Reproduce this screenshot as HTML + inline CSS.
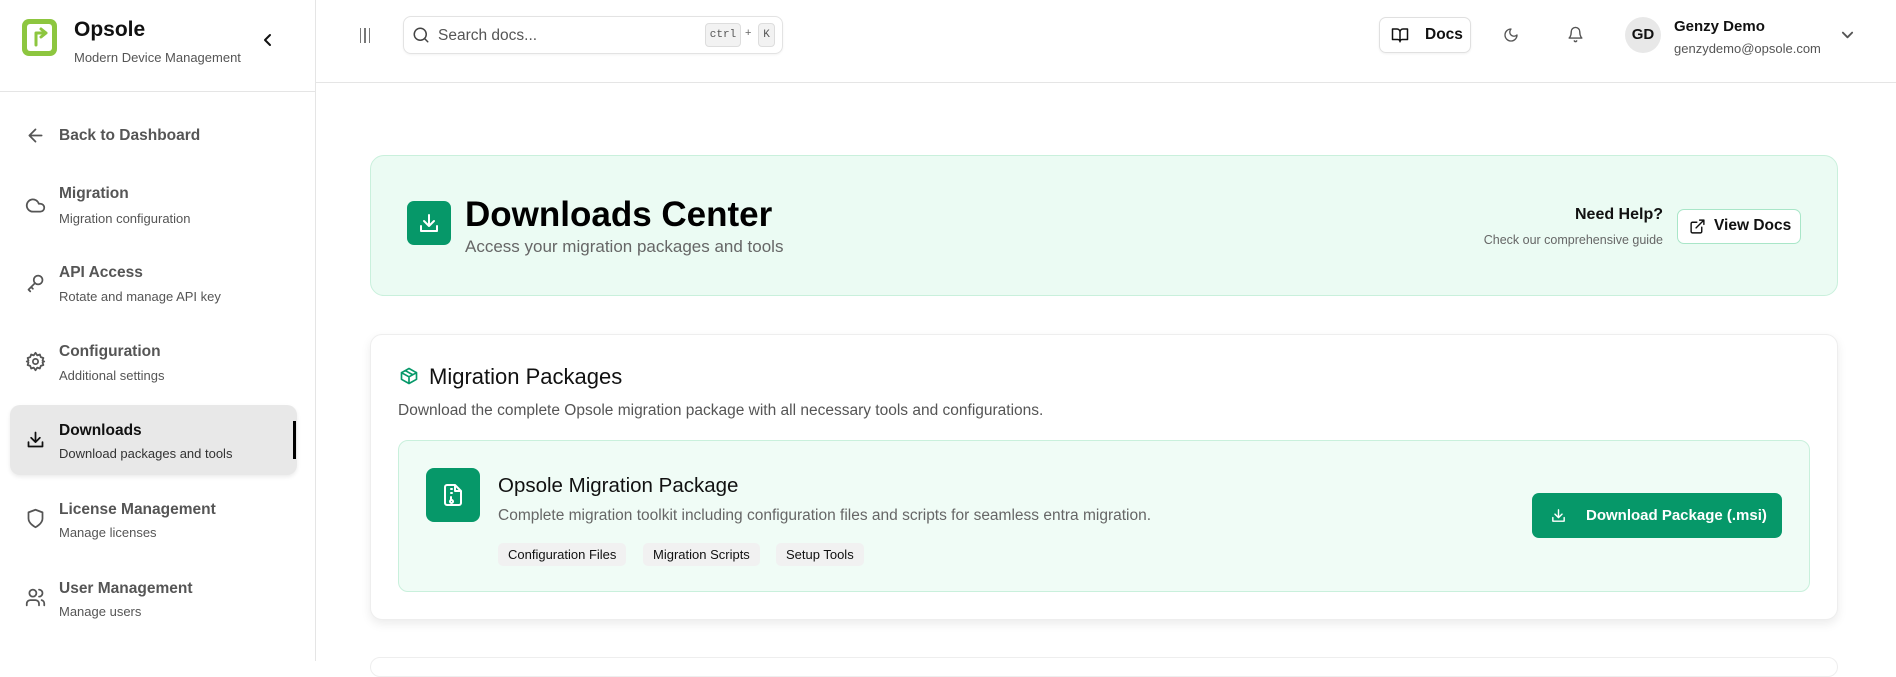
<!DOCTYPE html>
<html><head><meta charset="utf-8"><style>
*{box-sizing:border-box;margin:0;padding:0}
body{width:1896px;height:661px;overflow:hidden;background:#fff;font-family:"Liberation Sans",sans-serif;color:#111;position:relative}
.abs{position:absolute}
.sb{left:0;top:0;width:316px;height:661px;border-right:1px solid #e5e5e5}
.nav .t{font-size:15.5px;color:#555;font-weight:bold;position:absolute;left:59px;white-space:nowrap}
.nav .s{font-size:13px;color:#555;position:absolute;left:59px;white-space:nowrap}
.ic{position:absolute;left:25px;width:21px;height:21px}
svg{fill:none;stroke:currentColor;stroke-width:2;stroke-linecap:round;stroke-linejoin:round}
.tag{position:absolute;top:543px;height:23px;background:#f1f1f1;border-radius:5px;font-size:13px;line-height:23px;padding:0 10px;color:#111}
</style></head><body>
<div class="abs sb">
 <div class="abs" style="left:22px;top:19px;width:35px;height:37px;background:#8dc63f;border-radius:7px"></div>
 <div class="abs" style="left:27px;top:24px;width:25px;height:27px;background:#fff;border-radius:3px"></div>
 <svg class="abs" style="left:30px;top:27px;width:20px;height:20px;color:#8dc63f;stroke-width:3" viewBox="0 0 20 20"><path d="M6 18V6h10M11 2l5 4-5 4"/></svg>
 <div class="abs" style="left:74px;top:18px;font-size:21px;font-weight:bold">Opsole</div>
 <div class="abs" style="left:74px;top:50px;font-size:13px;color:#555">Modern Device Management</div>
 <svg class="abs" style="left:261px;top:33px;width:14px;height:14px" viewBox="0 0 14 14"><path d="M9 2L4 7l5 5"/></svg>
 <div class="abs" style="left:0;top:91px;width:316px;border-top:1px solid #e5e5e5"></div>
 <div class="nav">
  <svg class="ic" style="top:125px;color:#555" viewBox="0 0 24 24"><path d="M19 12H5M12 19l-7-7 7-7"/></svg>
  <div class="t" style="top:127px">Back to Dashboard</div>
  <svg class="ic" style="top:195px;color:#555" viewBox="0 0 24 24"><path d="M17.5 19H9a7 7 0 1 1 6.7-9h1.8a4.5 4.5 0 1 1 0 9z"/></svg>
  <div class="t" style="top:185px">Migration</div><div class="s" style="top:211px">Migration configuration</div>
  <svg class="ic" style="top:273px;color:#555" viewBox="0 0 24 24"><circle cx="15" cy="8" r="5"/><path d="M11.5 11.5L4 19l2 2M7 16l2 2"/></svg>
  <div class="t" style="top:264px">API Access</div><div class="s" style="top:289px">Rotate and manage API key</div>
  <svg class="ic" style="top:351px;color:#555" viewBox="0 0 24 24"><circle cx="12" cy="12" r="3"/><path d="M12 2l2 3 3-1 1 3 3 1-1 3 2 1-2 1 1 3-3 1-1 3-3-1-2 3-2-3-3 1-1-3-3-1 1-3-2-1 2-1-1-3 3-1 1-3 3 1z"/></svg>
  <div class="t" style="top:343px">Configuration</div><div class="s" style="top:368px">Additional settings</div>
  <div class="abs" style="left:10px;top:405px;width:287px;height:70px;background:#e8e8e8;border-radius:10px;box-shadow:0 2px 4px rgba(0,0,0,.08)"></div>
  <div class="abs" style="left:293px;top:421px;width:3px;height:38px;background:#000"></div>
  <svg class="ic" style="top:429px;color:#111" viewBox="0 0 24 24"><path d="M4 15v5h16v-5M12 4v11M7 10l5 5 5-5"/></svg>
  <div class="t" style="top:422px;color:#111">Downloads</div><div class="s" style="top:446px;color:#333">Download packages and tools</div>
  <svg class="ic" style="top:508px;color:#555" viewBox="0 0 24 24"><path d="M12 22s8-4 8-10V5l-8-3-8 3v7c0 6 8 10 8 10z"/></svg>
  <div class="t" style="top:501px">License Management</div><div class="s" style="top:525px">Manage licenses</div>
  <svg class="ic" style="top:587px;color:#555" viewBox="0 0 24 24"><circle cx="9" cy="7" r="4"/><path d="M2 21v-2a4 4 0 0 1 4-4h6a4 4 0 0 1 4 4v2M16 3a4 4 0 0 1 0 8M22 21v-2a4 4 0 0 0-3-4"/></svg>
  <div class="t" style="top:580px">User Management</div><div class="s" style="top:604px">Manage users</div>
 </div>
</div>
<!-- header -->
<div class="abs" style="left:316px;top:82px;width:1580px;border-top:1px solid #e5e5e5"></div>
<div class="abs" style="left:360px;top:28px;width:10px;height:15px;border-left:1.5px solid #777;border-right:1.5px solid #777"></div>
<div class="abs" style="left:364px;top:28px;width:1.5px;height:15px;background:#777"></div>
<div class="abs" style="left:403px;top:16px;width:380px;height:38px;border:1px solid #e3e3e3;border-radius:8px;box-shadow:0 1px 2px rgba(0,0,0,.05)"></div>
<svg class="abs" style="left:412px;top:26px;width:18px;height:18px;color:#444" viewBox="0 0 24 24"><circle cx="11" cy="11" r="8"/><path d="M21 21l-4.3-4.3"/></svg>
<div class="abs" style="left:438px;top:27px;font-size:15.5px;color:#555">Search docs...</div>
<div class="abs" style="left:705px;top:23px;width:36px;height:24px;background:#f2f2f2;border:1px solid #ddd;border-radius:4px;font:11px 'Liberation Mono',monospace;color:#555;text-align:center;line-height:22px">ctrl</div>
<div class="abs" style="left:745px;top:27px;font-size:11px;color:#666">+</div>
<div class="abs" style="left:758px;top:23px;width:17px;height:24px;background:#f2f2f2;border:1px solid #ddd;border-radius:4px;font:11px 'Liberation Mono',monospace;color:#555;text-align:center;line-height:22px">K</div>
<div class="abs" style="left:1379px;top:17px;width:92px;height:36px;border:1px solid #e0e0e0;border-radius:7px;box-shadow:0 1px 2px rgba(0,0,0,.06)"></div>
<svg class="abs" style="left:1391px;top:26px;width:18px;height:18px;color:#111" viewBox="0 0 24 24"><path d="M2 4h6a4 4 0 0 1 4 4v13a3 3 0 0 0-3-3H2zM22 4h-6a4 4 0 0 0-4 4v13a3 3 0 0 1 3-3h7z"/></svg>
<div class="abs" style="left:1425px;top:26px;font-size:15.5px;font-weight:bold">Docs</div>
<svg class="abs" style="left:1503px;top:27px;width:16px;height:16px;color:#555" viewBox="0 0 24 24"><path d="M12 3a6 6 0 0 0 9 9 9 9 0 1 1-9-9z"/></svg>
<svg class="abs" style="left:1567px;top:26px;width:17px;height:17px;color:#555" viewBox="0 0 24 24"><path d="M6 8a6 6 0 0 1 12 0c0 7 3 9 3 9H3s3-2 3-9M10.3 21a1.9 1.9 0 0 0 3.4 0"/></svg>
<div class="abs" style="left:1625px;top:17px;width:36px;height:36px;border-radius:50%;background:#e8e8e8;font-size:15px;font-weight:bold;text-align:center;line-height:36px">GD</div>
<div class="abs" style="left:1674px;top:18px;font-size:15px;font-weight:bold;color:#111">Genzy Demo</div>
<div class="abs" style="left:1674px;top:41px;font-size:13px;color:#555">genzydemo@opsole.com</div>
<svg class="abs" style="left:1841px;top:28px;width:13px;height:13px;color:#555" viewBox="0 0 14 14"><path d="M2 5l5 5 5-5"/></svg>
<!-- hero -->
<div class="abs" style="left:370px;top:155px;width:1468px;height:141px;background:#ebfbf3;border:1px solid #c9f0dc;border-radius:14px"></div>
<div class="abs" style="left:407px;top:201px;width:44px;height:44px;background:#069869;border-radius:7px"></div>
<svg class="abs" style="left:417px;top:211px;width:24px;height:24px;color:#fff" viewBox="0 0 24 24"><path d="M4 15v5h16v-5M12 4v11M7 10l5 5 5-5"/></svg>
<div class="abs" style="left:465px;top:195px;font-size:35px;font-weight:bold;color:#000">Downloads Center</div>
<div class="abs" style="left:465px;top:237px;font-size:17px;color:#666">Access your migration packages and tools</div>
<div class="abs" style="left:1480px;top:206px;width:183px;text-align:right;font-size:16px;font-weight:bold">Need Help?</div>
<div class="abs" style="left:1400px;top:233px;width:263px;text-align:right;font-size:12.5px;color:#666">Check our comprehensive guide</div>
<div class="abs" style="left:1677px;top:209px;width:124px;height:35px;background:#fff;border:1px solid #a9e6c8;border-radius:7px"></div>
<svg class="abs" style="left:1689px;top:218px;width:17px;height:17px;color:#111" viewBox="0 0 24 24"><path d="M15 3h6v6M10 14L21 3M18 13v6a2 2 0 0 1-2 2H5a2 2 0 0 1-2-2V8a2 2 0 0 1 2-2h6"/></svg>
<div class="abs" style="left:1714px;top:217px;font-size:15.5px;font-weight:bold">View Docs</div>
<!-- packages card -->
<div class="abs" style="left:370px;top:334px;width:1468px;height:286px;background:#fff;border:1px solid #eee;border-radius:12px;box-shadow:0 4px 10px rgba(0,0,0,.08)"></div>
<svg class="abs" style="left:399px;top:366px;width:20px;height:20px;color:#069869" viewBox="0 0 24 24"><path d="M21 8l-9-5-9 5v8l9 5 9-5zM3 8l9 5 9-5M12 13v8M7.5 5.5l9 5"/></svg>
<div class="abs" style="left:429px;top:364px;font-size:22px;color:#111">Migration Packages</div>
<div class="abs" style="left:398px;top:402px;font-size:15.5px;color:#555">Download the complete Opsole migration package with all necessary tools and configurations.</div>
<div class="abs" style="left:398px;top:440px;width:1412px;height:152px;background:#f0fcf6;border:1px solid #c9f0dc;border-radius:10px"></div>
<div class="abs" style="left:426px;top:468px;width:54px;height:54px;background:#069869;border-radius:8px"></div>
<svg class="abs" style="left:441px;top:482px;width:24px;height:26px;color:#fff" viewBox="0 0 24 24"><path d="M14 2H6a2 2 0 0 0-2 2v16a2 2 0 0 0 2 2h12a2 2 0 0 0 2-2V8zM14 2v6h6M10 6h1M10 10h1M10 14v3"/><circle cx="10.5" cy="18.5" r="1.5"/></svg>
<div class="abs" style="left:498px;top:474px;font-size:20.5px;color:#111">Opsole Migration Package</div>
<div class="abs" style="left:498px;top:507px;font-size:15.5px;color:#666">Complete migration toolkit including configuration files and scripts for seamless entra migration.</div>
<div class="tag" style="left:498px">Configuration Files</div>
<div class="tag" style="left:643px">Migration Scripts</div>
<div class="tag" style="left:776px">Setup Tools</div>
<div class="abs" style="left:1532px;top:493px;width:250px;height:45px;background:#069869;border-radius:7px"></div>
<svg class="abs" style="left:1550px;top:507px;width:17px;height:17px;color:#fff" viewBox="0 0 24 24"><path d="M4 15v5h16v-5M12 4v11M7 10l5 5 5-5"/></svg>
<div class="abs" style="left:1586px;top:507px;font-size:15px;font-weight:bold;color:#fff">Download Package (.msi)</div>
<div class="abs" style="left:370px;top:657px;width:1468px;height:20px;border:1px solid #eee;border-radius:12px"></div>
</body></html>
